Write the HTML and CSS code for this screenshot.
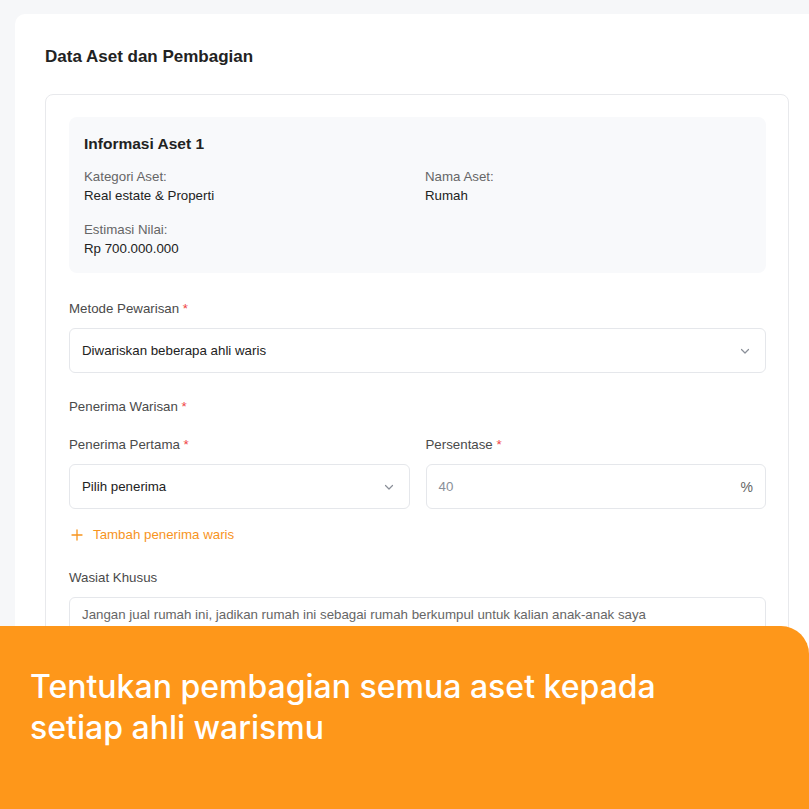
FILE: index.html
```html
<!DOCTYPE html>
<html lang="id">
<head>
    <meta charset="UTF-8">
    <meta name="viewport" content="width=device-width, initial-scale=1.0">
    <title>Data Aset dan Pembagian</title>
    <link rel="stylesheet" href="styles.css">
</head>
<body>
    <div class="page">
        <div class="card">
            <h2 class="card-title">Data Aset dan Pembagian</h2>

            <div class="asset-box">
                <div class="asset-info">
                    <h3>Informasi Aset 1</h3>
                    <div class="info-grid">
                        <div class="info-item">
                            <span class="info-label">Kategori Aset:</span>
                            <span class="info-value">Real estate &amp; Properti</span>
                        </div>
                        <div class="info-item">
                            <span class="info-label">Nama Aset:</span>
                            <span class="info-value">Rumah</span>
                        </div>
                        <div class="info-item">
                            <span class="info-label">Estimasi Nilai:</span>
                            <span class="info-value">Rp 700.000.000</span>
                        </div>
                    </div>
                </div>

                <div class="field">
                    <label class="field-label">Metode Pewarisan <span class="req">*</span></label>
                    <div class="select">
                        <span>Diwariskan beberapa ahli waris</span>
                        <svg class="chevron" width="12" height="12" viewBox="0 0 12 12"><path d="M2.5 4.5 6 8l3.5-3.5" fill="none" stroke="#8a8f98" stroke-width="1.2" stroke-linecap="round" stroke-linejoin="round"/></svg>
                    </div>
                </div>

                <p class="section-label">Penerima Warisan <span class="req">*</span></p>

                <div class="heir-row">
                    <div class="field">
                        <label class="field-label">Penerima Pertama <span class="req">*</span></label>
                        <div class="select">
                            <span>Pilih penerima</span>
                            <svg class="chevron" width="12" height="12" viewBox="0 0 12 12"><path d="M2.5 4.5 6 8l3.5-3.5" fill="none" stroke="#8a8f98" stroke-width="1.2" stroke-linecap="round" stroke-linejoin="round"/></svg>
                        </div>
                    </div>
                    <div class="field">
                        <label class="field-label">Persentase <span class="req">*</span></label>
                        <div class="select percent">
                            <span class="muted">40</span>
                            <span class="suffix">%</span>
                        </div>
                    </div>
                </div>

                <a class="add-link" href="#">
                    <svg width="12" height="12" viewBox="0 0 12 12"><path d="M6 1v10M1 6h10" stroke="#f7941d" stroke-width="1.3" stroke-linecap="round"/></svg>
                    Tambah penerima waris
                </a>

                <div class="field">
                    <label class="field-label">Wasiat Khusus</label>
                    <div class="textarea">Jangan jual rumah ini, jadikan rumah ini sebagai rumah berkumpul untuk kalian anak-anak saya</div>
                </div>
            </div>
        </div>
    </div>

    <div class="banner">
        <p>Tentukan pembagian semua aset kepada<br>setiap ahli warismu</p>
    </div>
</body>
</html>
```

FILE: styles.css
```css
body {
    margin: 0;
    background: #f6f7f9;
    font-family: "Liberation Sans", Arial, sans-serif;
    color: #222;
    height: 809px;
    overflow: hidden;
    position: relative;
}

.page {
    padding: 14px 0 0 15px;
}

.card {
    background: #fff;
    border-radius: 10px 0 0 0;
    padding: 33px 0 40px 30px;
}

.card-title {
    margin: 0 0 27px;
    font-size: 17px;
    line-height: 20px;
    font-weight: bold;
    color: #222;
}

.asset-box {
    margin-right: 20px;
    border: 1px solid #e8e9ec;
    border-radius: 8px;
    padding: 22px 22px 30px 23px;
}

.asset-info {
    background: #f8f9fb;
    border-radius: 8px;
    padding: 18px 15px 15px;
    margin-bottom: 26px;
}

.asset-info h3 {
    margin: 0 0 14px;
    font-size: 15.5px;
    line-height: 18px;
    font-weight: bold;
    color: #222;
}

.info-grid {
    display: grid;
    grid-template-columns: 1fr 1fr;
    column-gap: 15px;
    row-gap: 15px;
}

.info-item {
    display: flex;
    flex-direction: column;
    font-size: 13.3px;
    line-height: 19px;
}

.info-label {
    color: #666;
}

.info-value {
    color: #222;
}

.field {
    display: flex;
    flex-direction: column;
}

.field-label,
.section-label {
    font-size: 13.3px;
    line-height: 19px;
    color: #4a4a4a;
}

.field-label {
    margin-bottom: 10px;
}

.section-label {
    margin: 24px 0 19px;
}

.req {
    color: #ef4444;
}

.select {
    height: 45px;
    box-sizing: border-box;
    border: 1px solid #e5e7eb;
    border-radius: 6px;
    padding: 0 12px;
    display: flex;
    align-items: center;
    justify-content: space-between;
    font-size: 13.3px;
    color: #222;
}

.chevron {
    margin-right: 2px;
}

.muted {
    color: #8a8f98;
}

.suffix {
    font-size: 14px;
    color: #666;
}

.heir-row {
    display: grid;
    grid-template-columns: 1fr 1fr;
    gap: 16px;
}

.add-link {
    display: flex;
    align-items: center;
    gap: 10px;
    margin: 16px 0 24px;
    padding-left: 2px;
    font-size: 13.3px;
    line-height: 19px;
    color: #f7941d;
    text-decoration: none;
}

.textarea {
    border: 1px solid #e5e7eb;
    border-radius: 6px;
    padding: 8px 12px;
    height: 80px;
    font-size: 13.3px;
    line-height: 18px;
    color: #666;
}

.banner {
    position: absolute;
    left: 0;
    right: 0;
    bottom: 0;
    height: 183px;
    background: #fe971a;
    border-radius: 0 28px 0 0;
}

.banner p {
    margin: 0;
    padding: 40px 30px 0;
    font-family: Inter, "Noto Sans", sans-serif;
    font-weight: 500;
    font-size: 32px;
    line-height: 41px;
    color: #fff;
}
```
